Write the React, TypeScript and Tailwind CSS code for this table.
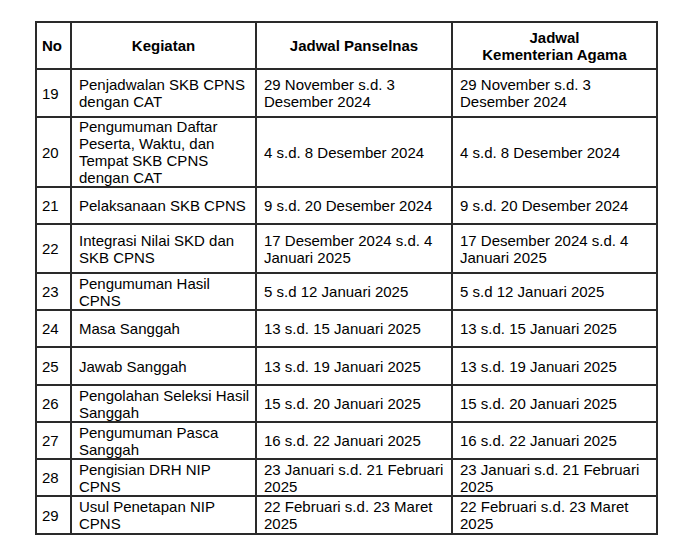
type Row = {
  no: string
  kegiatan: string[]
  panselnas: string[]
  kemenag: string[]
  h: string
}

const rows: Row[] = [
  { no: '19', kegiatan: ['Penjadwalan SKB CPNS', 'dengan CAT'], panselnas: ['29 November s.d. 3', 'Desember 2024'], kemenag: ['29 November s.d. 3', 'Desember 2024'], h: 'h-[48px]' },
  { no: '20', kegiatan: ['Pengumuman Daftar', 'Peserta, Waktu, dan', 'Tempat SKB CPNS', 'dengan CAT'], panselnas: ['4 s.d. 8 Desember 2024'], kemenag: ['4 s.d. 8 Desember 2024'], h: 'h-[70px]' },
  { no: '21', kegiatan: ['Pelaksanaan SKB CPNS'], panselnas: ['9 s.d. 20 Desember 2024'], kemenag: ['9 s.d. 20 Desember 2024'], h: 'h-[37px]' },
  { no: '22', kegiatan: ['Integrasi Nilai SKD dan', 'SKB CPNS'], panselnas: ['17 Desember 2024 s.d. 4', 'Januari 2025'], kemenag: ['17 Desember 2024 s.d. 4', 'Januari 2025'], h: 'h-[49px]' },
  { no: '23', kegiatan: ['Pengumuman Hasil', 'CPNS'], panselnas: ['5 s.d 12 Januari 2025'], kemenag: ['5 s.d 12 Januari 2025'], h: 'h-[37px]' },
  { no: '24', kegiatan: ['Masa Sanggah'], panselnas: ['13 s.d. 15 Januari 2025'], kemenag: ['13 s.d. 15 Januari 2025'], h: 'h-[37px]' },
  { no: '25', kegiatan: ['Jawab Sanggah'], panselnas: ['13 s.d. 19 Januari 2025'], kemenag: ['13 s.d. 19 Januari 2025'], h: 'h-[38px]' },
  { no: '26', kegiatan: ['Pengolahan Seleksi Hasil', 'Sanggah'], panselnas: ['15 s.d. 20 Januari 2025'], kemenag: ['15 s.d. 20 Januari 2025'], h: 'h-[37px]' },
  { no: '27', kegiatan: ['Pengumuman Pasca', 'Sanggah'], panselnas: ['16 s.d. 22 Januari 2025'], kemenag: ['16 s.d. 22 Januari 2025'], h: 'h-[37px]' },
  { no: '28', kegiatan: ['Pengisian DRH NIP', 'CPNS'], panselnas: ['23 Januari s.d. 21 Februari', '2025'], kemenag: ['23 Januari s.d. 21 Februari', '2025'], h: 'h-[37px]' },
  { no: '29', kegiatan: ['Usul Penetapan NIP', 'CPNS'], panselnas: ['22 Februari s.d. 23 Maret', '2025'], kemenag: ['22 Februari s.d. 23 Maret', '2025'], h: 'h-[38px]' },
]

const cell = 'flex items-center border-r-2 border-b-2 border-[#2a2a2a]'

function Lines({ lines }: { lines: string[] }) {
  return (
    <div>
      {lines.map((l, i) => (
        <div key={i} className="whitespace-nowrap">{l}</div>
      ))}
    </div>
  )
}

export default function App() {
  return (
    <div className="min-h-[548px] w-[673px] bg-white pt-[21px] pl-[35px] font-['Liberation_Sans',Arial,sans-serif] text-[15px] leading-[17px] text-black">
      <div className="grid w-[623px] grid-cols-[35px_185px_196px_205px] border-t-2 border-l-2 border-[#2a2a2a]">
        {/* Header */}
        <div className={`${cell} h-[47px] pl-[5px] font-bold`}>No</div>
        <div className={`${cell} h-[47px] justify-center font-bold`}>Kegiatan</div>
        <div className={`${cell} h-[47px] justify-center font-bold`}>Jadwal Panselnas</div>
        <div className={`${cell} h-[47px] justify-center text-center font-bold`}>
          <div>
            <div>Jadwal</div>
            <div>Kementerian Agama</div>
          </div>
        </div>

        {rows.map((r) => (
          <div key={r.no} className="contents">
            <div className={`${cell} ${r.h} pl-[5px]`}>{r.no}</div>
            <div className={`${cell} ${r.h} pl-[7px]`}>
              <Lines lines={r.kegiatan} />
            </div>
            <div className={`${cell} ${r.h} pl-[7px]`}>
              <Lines lines={r.panselnas} />
            </div>
            <div className={`${cell} ${r.h} pl-[7px]`}>
              <Lines lines={r.kemenag} />
            </div>
          </div>
        ))}
      </div>
    </div>
  )
}
